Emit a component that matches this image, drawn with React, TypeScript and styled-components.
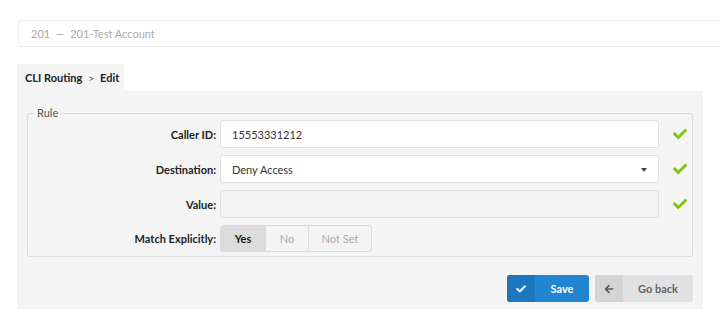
import React from "react";
import styled, { createGlobalStyle } from "styled-components";
import { FaCheck, FaArrowLeft } from "react-icons/fa";

//------------------------------------------------------

const GlobalStyle = createGlobalStyle`
  html, body {
    margin: 0;
    padding: 0;
    background: #fff;
    overflow: hidden;
  }
  body {
    font-family: Lato, "Open Sans", "Liberation Sans", sans-serif;
    font-size: 11px;
    color: #222;
  }
  * { box-sizing: border-box; }
`;

const Page = styled.div`
  padding: 20px 17px 0 17px;
`;

const AccountBar = styled.div`
  margin: 0 -30px 0 1px;
  height: 27px;
  border: 1px solid #eee;
  border-radius: 3px;
  padding-left: 12px;
  display: flex;
  align-items: center;
  color: #aaa;
`;

const Tab = styled.div`
  margin-top: 17px;
  width: 107px;
  height: 27px;
  background: #f4f4f4;
  padding-left: 8px;
  display: flex;
  align-items: center;
  gap: 6px;
  white-space: nowrap;
  font-weight: 700;
  color: #222;
`;

const Crumb = styled.span`
  font-weight: 400;
  font-size: 10px;
  color: #444;
`;

const Panel = styled.div`
  background: #f4f4f4;
  padding: 15px 10px 7px 10px;
`;

const Fieldset = styled.fieldset`
  margin: 0;
  padding: 0 0 4px 0;
  border: 1px solid #dcdcdc;
  border-radius: 3px;
`;

const Legend = styled.legend`
  margin-left: 6px;
  padding: 0 3px;
  line-height: 14px;
  color: #555;
`;

const Grid = styled.div`
  display: grid;
  grid-template-columns: 188px 439px 1fr;
  column-gap: 4px;
  row-gap: 7px;
  align-items: center;
`;

const Label = styled.label`
  text-align: right;
  font-weight: 700;
  color: #222;
`;

const Field = styled.div<{ $disabled?: boolean }>`
  position: relative;
  height: 28px;
  border: 1px solid #e0e0e0;
  border-radius: 3px;
  background: ${p => (p.$disabled ? "#f4f4f4" : "#fff")};
  padding-left: 11px;
  display: flex;
  align-items: center;
  color: #333;
`;

const Caret = styled.span`
  position: absolute;
  right: 11px;
  top: 12px;
  border-left: 3px solid transparent;
  border-right: 3px solid transparent;
  border-top: 4px solid #444;
`;

const Valid = styled.div`
  display: flex;
  justify-content: center;
  padding-left: 4px;
  color: #7ac70c;
  font-size: 14px;
`;

const Toggle = styled.div`
  display: flex;
  height: 27px;
`;

const ToggleItem = styled.div<{ $active?: boolean; $w: number }>`
  width: ${p => p.$w}px;
  display: flex;
  align-items: center;
  justify-content: center;
  border: 1px solid #dcdcdc;
  margin-left: -1px;
  background: ${p => (p.$active ? "#dcdcdc" : "#f4f4f4")};
  color: ${p => (p.$active ? "#222" : "#aaa")};
  font-weight: ${p => (p.$active ? 700 : 400)};
  &:first-child {
    margin-left: 0;
    border-radius: 3px 0 0 3px;
  }
  &:last-child {
    border-radius: 0 3px 3px 0;
  }
`;

const Actions = styled.div`
  margin-top: 18px;
  display: flex;
  justify-content: flex-end;
  gap: 6px;
`;

const Button = styled.button<{ $primary?: boolean; $w: number }>`
  width: ${p => p.$w}px;
  height: 27px;
  padding: 0;
  border: none;
  border-radius: 3px;
  overflow: hidden;
  display: flex;
  font-family: inherit;
  font-size: 11px;
  font-weight: 700;
  background: ${p => (p.$primary ? "#2185d0" : "#e0e1e2")};
  color: ${p => (p.$primary ? "#fff" : "#666")};
  cursor: pointer;
`;

const ButtonIcon = styled.span<{ $primary?: boolean }>`
  width: 28px;
  height: 100%;
  display: flex;
  align-items: center;
  justify-content: center;
  background: ${p => (p.$primary ? "#1b78bf" : "#d4d4d5")};
  color: ${p => (p.$primary ? "#fff" : "#555")};
  font-size: 10px;
`;

const ButtonText = styled.span`
  flex: 1;
  display: flex;
  align-items: center;
  justify-content: center;
`;

//------------------------------------------------------

export default function App() {
  return (
    <Page>
      <GlobalStyle />
      <AccountBar>201&nbsp;&nbsp;—&nbsp;&nbsp;201-Test Account</AccountBar>
      <Tab>
        CLI Routing <Crumb>&gt;</Crumb> Edit
      </Tab>
      <Panel>
        <Fieldset>
          <Legend>Rule</Legend>
          <Grid>
            <Label>Caller ID:</Label>
            <Field>15553331212</Field>
            <Valid><FaCheck /></Valid>

            <Label>Destination:</Label>
            <Field>
              Deny Access
              <Caret />
            </Field>
            <Valid><FaCheck /></Valid>

            <Label>Value:</Label>
            <Field $disabled />
            <Valid><FaCheck /></Valid>

            <Label>Match Explicitly:</Label>
            <Toggle>
              <ToggleItem $active $w={46}>Yes</ToggleItem>
              <ToggleItem $w={44}>No</ToggleItem>
              <ToggleItem $w={64}>Not Set</ToggleItem>
            </Toggle>
            <div />
          </Grid>
        </Fieldset>
        <Actions>
          <Button $primary $w={82}>
            <ButtonIcon $primary><FaCheck /></ButtonIcon>
            <ButtonText>Save</ButtonText>
          </Button>
          <Button $w={98}>
            <ButtonIcon><FaArrowLeft /></ButtonIcon>
            <ButtonText>Go back</ButtonText>
          </Button>
        </Actions>
      </Panel>
    </Page>
  );
}
